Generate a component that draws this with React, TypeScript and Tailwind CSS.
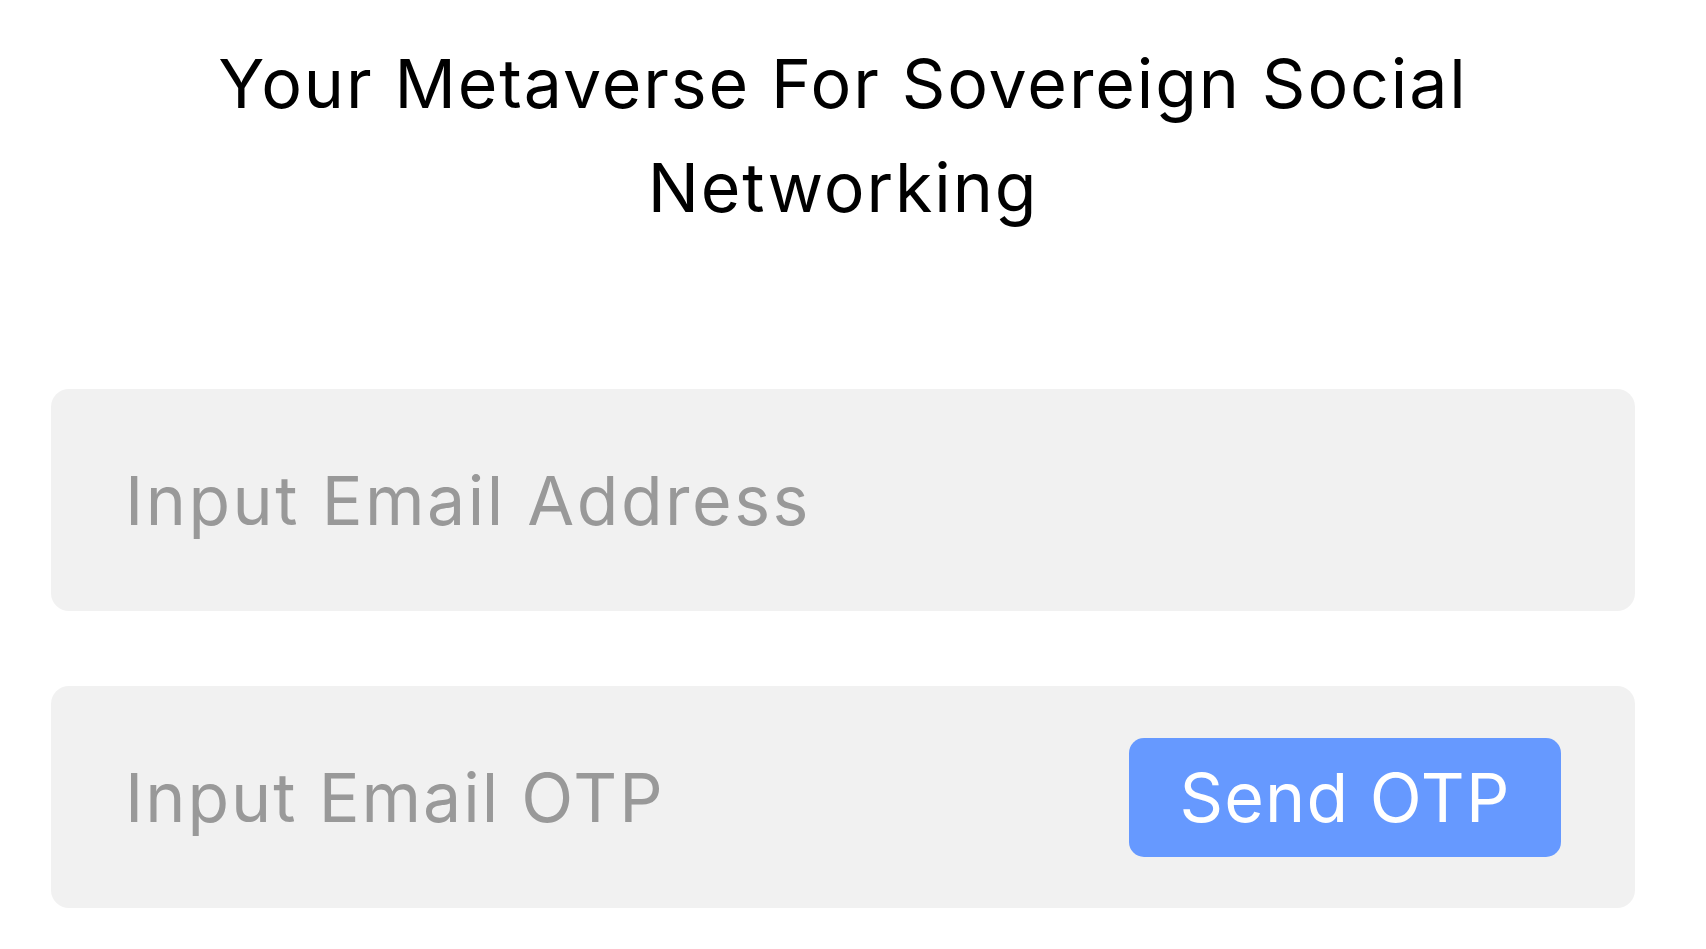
import React from "react";

export default function App() {
  return (
    <div
      className="min-h-screen bg-white pl-[51px] pr-[71px]"
      style={{ fontFamily: "Inter, 'Noto Sans', sans-serif" }}
    >
      <h1 className="pt-[31px] text-center text-[68px] font-normal leading-[104px] tracking-[1.9px] text-black">
        Your Metaverse For Sovereign Social
        <br />
        Networking
      </h1>
      <div className="mt-[150px] flex h-[222px] items-center rounded-[18px] bg-[#f1f1f1] pl-[74px]">
        <span className="text-[68px] leading-none tracking-[2.5px] text-[#999999]">Input Email Address</span>
      </div>
      <div className="mt-[75px] flex h-[222px] items-center justify-between rounded-[18px] bg-[#f1f1f1] pl-[74px] pr-[74px]">
        <span className="text-[68px] leading-none tracking-[2px] text-[#999999]">Input Email OTP</span>
        <button className="flex h-[119px] w-[432px] items-center justify-center rounded-[15px] bg-[#6699ff] text-[68px] leading-none tracking-[1.2px] text-white">
          Send OTP
        </button>
      </div>
    </div>
  );
}
